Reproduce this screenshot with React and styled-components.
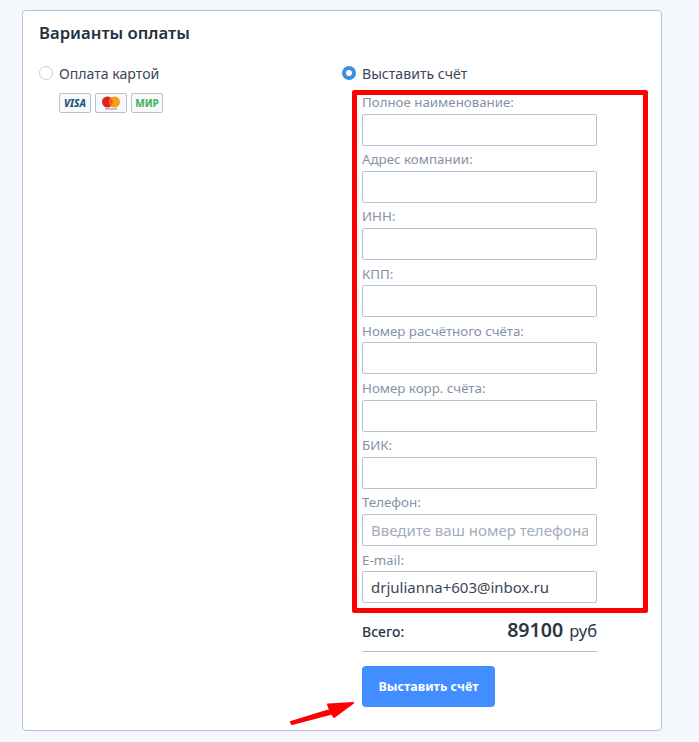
import React from 'react'
import styled, { createGlobalStyle } from 'styled-components'

const GlobalStyle = createGlobalStyle`
  html, body {
    margin: 0;
    padding: 0;
    background: #f4f7fb;
    font-family: "Noto Sans", "Open Sans", sans-serif;
  }
  * { box-sizing: border-box; }
`

const Page = styled.div`
  width: 699px;
  height: 742px;
  overflow: hidden;
  padding: 10px 37px 11px 22px;
`
const Card = styled.div`
  position: relative;
  height: 721px;
  background: #fff;
  border: 1px solid #b8c2d2;
  border-radius: 4px;
  padding: 10px 16px 0;
`
const Title = styled.h2`
  margin: 0;
  height: 24px;
  font-size: 16.7px;
  line-height: 24px;
  font-weight: 600;
  color: #22303f;
`
const Columns = styled.div`
  display: grid;
  grid-template-columns: 303px 1fr;
  margin-top: 16px;
`
const Column = styled.div`
  display: flex;
  flex-direction: column;
`
const RadioRow = styled.label`
  display: flex;
  align-items: center;
  gap: 6px;
  height: 24px;
  font-size: 14.1px;
  color: #3a4656;
`
const Radio = styled.span`
  width: 14px;
  height: 14px;
  border-radius: 50%;
  flex: none;
  background: #fff;
  border: ${p => (p.$checked ? '4px solid #3b8fe0' : '1px solid #c9ced6')};
`
const Cards = styled.div`
  display: flex;
  gap: 4px;
  margin: 8px 0 0 20px;
`
const PayBadge = styled.div`
  width: 32px;
  height: 20px;
  display: flex;
  align-items: center;
  justify-content: center;
  background: #f7f9fc;
  border: 1px solid #b8c2d2;
  border-radius: 2px;
`
const VisaMark = styled.span`
  font-size: 10px;
  line-height: 1;
  font-weight: 800;
  font-style: italic;
  color: #23527c;
`
const MirMark = styled.span`
  font-size: 10px;
  line-height: 1;
  font-weight: 800;
  color: #4db45f;
`
const RedFrame = styled.div`
  width: 296px;
  height: 523px;
  margin: 5px 0 0 10px;
  padding: 0 0 0 5px;
  border: 5px solid #f00;
  border-radius: 2px;
  display: flex;
  flex-direction: column;
`
const Field = styled.div`
  width: 235px;
  height: 57.2px;
  flex: none;
  display: flex;
  flex-direction: column;
`
const Label = styled.label`
  height: 18.6px;
  flex: none;
  font-size: 13.3px;
  line-height: 15px;
  color: #8492a6;
`
const Input = styled.input`
  width: 235px;
  height: 32px;
  flex: none;
  padding: 0 8px;
  border: 1px solid #b8c2d2;
  border-radius: 2px;
  background: #fff;
  font-family: inherit;
  font-size: 15px;
  color: #3a4656;
  &::placeholder { color: #a3adba; opacity: 1; }
`
const Summary = styled.div`
  width: 235px;
  height: 39px;
  margin-left: 20px;
  padding-top: 3px;
  display: flex;
  justify-content: space-between;
  align-items: baseline;
  border-bottom: 1px solid #b8c2d2;
  color: #2b3643;
`
const TotalLabel = styled.span`
  font-size: 14px;
  font-weight: 500;
`
const TotalPrice = styled.span`
  font-size: 19.6px;
  font-weight: 600;
`
const Currency = styled.span`
  font-size: 16.5px;
  font-weight: 400;
  margin-left: 6px;
`
const Submit = styled.button`
  width: 133px;
  height: 41px;
  margin: 14px 0 0 20px;
  border: 0;
  border-radius: 4px;
  background: #428dff;
  color: #fff;
  font-family: inherit;
  font-size: 12.5px;
  font-weight: 700;
`
const Arrow = styled.svg`
  position: absolute;
  left: 265px;
  top: 688px;
`

const fields = [
  { label: 'Полное наименование:' },
  { label: 'Адрес компании:' },
  { label: 'ИНН:' },
  { label: 'КПП:' },
  { label: 'Номер расчётного счёта:' },
  { label: 'Номер корр. счёта:' },
  { label: 'БИК:' },
  { label: 'Телефон:', placeholder: 'Введите ваш номер телефона' },
  { label: 'E-mail:', value: 'drjulianna+603@inbox.ru' },
]

const App = () => (
  <Page>
    <GlobalStyle />
    <Card>
      <Title>Варианты оплаты</Title>
      <Columns>
        <Column>
          <RadioRow>
            <Radio />
            Оплата картой
          </RadioRow>
          <Cards>
            <PayBadge><VisaMark>VISA</VisaMark></PayBadge>
            <PayBadge>
              <svg width="20" height="15" viewBox="0 0 20 15">
                <circle cx="6.5" cy="6" r="5.5" fill="#e2231a" />
                <circle cx="13.5" cy="6" r="5.5" fill="#f79e1b" />
                <path d="M10 1.8a5.5 5.5 0 0 1 0 8.4a5.5 5.5 0 0 1 0-8.4z" fill="#f0641e" />
                <rect x="4" y="12.5" width="12" height="1" fill="#8a8f96" />
              </svg>
            </PayBadge>
            <PayBadge><MirMark>МИР</MirMark></PayBadge>
          </Cards>
        </Column>
        <Column>
          <RadioRow>
            <Radio $checked />
            Выставить счёт
          </RadioRow>
          <RedFrame>
            {fields.map(f => (
              <Field key={f.label}>
                <Label>{f.label}</Label>
                <Input placeholder={f.placeholder} defaultValue={f.value} />
              </Field>
            ))}
          </RedFrame>
          <Summary>
            <TotalLabel>Всего:</TotalLabel>
            <TotalPrice>89100<Currency>руб</Currency></TotalPrice>
          </Summary>
          <Submit>Выставить счёт</Submit>
        </Column>
      </Columns>
      <Arrow width="70" height="30" viewBox="0 0 70 30">
        <path d="M3 23L42 11L40 5.500L65 4L46 18L44 14.500L4 25Z" fill="#f00" stroke="#f00" strokeWidth="2" strokeLinejoin="round" />
      </Arrow>
    </Card>
  </Page>
)

export default App
